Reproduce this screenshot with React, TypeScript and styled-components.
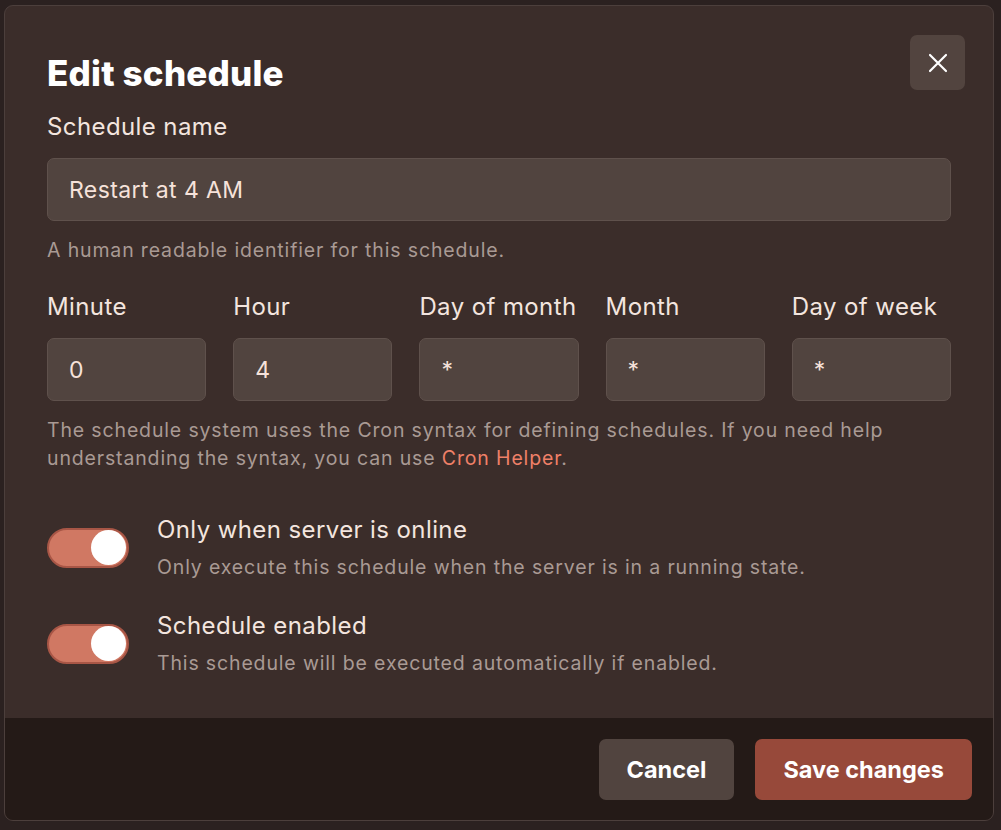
import { useState } from 'react'
import styled, { createGlobalStyle } from 'styled-components'

const GlobalStyle = createGlobalStyle`
  html, body {
    margin: 0;
    padding: 0;
    background: #2b2120;
  }
  body {
    font-family: Inter, "Noto Sans", sans-serif;
    color: #f3e5df;
  }
  * {
    box-sizing: border-box;
  }
`

const Page = styled.div`
  padding: 5px 7px 9px 4px;
  width: 1001px;
  height: 830px;
`

const DialogWindow = styled.div`
  position: relative;
  height: 816px;
  display: flex;
  flex-direction: column;
  background: #3b2d2a;
  border: 1px solid #4c3f3c;
  border-radius: 9px;
  overflow: hidden;
`

const DialogBody = styled.div`
  flex-grow: 1;
  display: flex;
  flex-direction: column;
  padding: 46px 42px 0 42px;
`

const Title = styled.h1`
  margin: 0;
  font-family: Inter, sans-serif;
  font-weight: 800;
  font-size: 35px;
  line-height: 42px;
  color: #ffffff;
  letter-spacing: 0.2px;
`

const CloseButton = styled.button`
  position: absolute;
  top: 29px;
  right: 28px;
  width: 55px;
  height: 55px;
  border: none;
  border-radius: 7px;
  background: #52443f;
  color: #ffffff;
  display: flex;
  align-items: center;
  justify-content: center;
  padding: 0;
  cursor: pointer;
`

const Field = styled.div<{ $top?: number }>`
  display: flex;
  flex-direction: column;
  margin-top: ${(p) => p.$top ?? 0}px;
  min-width: 0;
`

const Label = styled.label`
  font-size: 24px;
  line-height: 32px;
  letter-spacing: 0.4px;
  color: #f3e5df;
  margin-bottom: 15px;
  white-space: nowrap;
`

const Input = styled.input`
  height: 63px;
  width: 100%;
  background: #51443f;
  border: 1px solid #5f514c;
  border-radius: 7px;
  padding: 0 21px;
  font-family: Inter, sans-serif;
  font-size: 23px;
  letter-spacing: 0.4px;
  color: #f6e2da;
  outline: none;
`

const Helper = styled.p`
  margin: 15px 0 0 0;
  font-size: 19.5px;
  line-height: 28px;
  letter-spacing: 0.85px;
  color: #a99a94;
`

const HelperLink = styled.a`
  color: #ef8068;
  text-decoration: none;
`

const CronGrid = styled.div`
  display: grid;
  grid-template-columns: repeat(5, 1fr);
  column-gap: 27px;
  margin-top: 27px;
`

const ToggleRow = styled.div<{ $top: number }>`
  display: flex;
  align-items: center;
  gap: 28px;
  margin-top: ${(p) => p.$top}px;
`

const SwitchTrack = styled.button<{ $on: boolean }>`
  flex-shrink: 0;
  width: 82px;
  height: 40px;
  border-radius: 20px;
  border: 2px solid ${(p) => (p.$on ? '#a85646' : '#5f514c')};
  background: ${(p) => (p.$on ? '#d07863' : '#51443f')};
  padding: 0 1px;
  display: flex;
  align-items: center;
  justify-content: ${(p) => (p.$on ? 'flex-end' : 'flex-start')};
  cursor: pointer;
`

const SwitchKnob = styled.span`
  width: 35px;
  height: 35px;
  border-radius: 50%;
  background: #ffffff;
`

const ToggleText = styled.div`
  display: flex;
  flex-direction: column;
  gap: 7px;
`

const ToggleLabel = styled.div`
  font-size: 24px;
  line-height: 32px;
  letter-spacing: 0.4px;
  color: #f3e5df;
`

const ToggleDesc = styled.div`
  font-size: 19.5px;
  line-height: 28px;
  letter-spacing: 0.85px;
  color: #a99a94;
`

const DialogFooter = styled.div`
  height: 102px;
  background: #241a17;
  display: flex;
  justify-content: flex-end;
  align-items: center;
  gap: 21px;
  padding: 0 21px;
`

const Button = styled.button<{ $primary?: boolean }>`
  height: 61px;
  padding: 0 28px;
  border: none;
  border-radius: 7px;
  background: ${(p) => (p.$primary ? '#97493a' : '#51443f')};
  color: #ffffff;
  font-family: Inter, sans-serif;
  font-weight: 700;
  font-size: 23.5px;
  cursor: pointer;
`

const cronFields = [
  { label: 'Minute', value: '0' },
  { label: 'Hour', value: '4' },
  { label: 'Day of month', value: '*' },
  { label: 'Month', value: '*' },
  { label: 'Day of week', value: '*' },
]

function Toggle({ on, onChange }: { on: boolean; onChange: (v: boolean) => void }) {
  return (
    <SwitchTrack $on={on} onClick={() => onChange(!on)} aria-pressed={on}>
      <SwitchKnob />
    </SwitchTrack>
  )
}

export default function App() {
  const [online, setOnline] = useState(true)
  const [enabled, setEnabled] = useState(true)

  return (
    <Page>
      <GlobalStyle />
      <DialogWindow>
        <CloseButton aria-label="Close">
          <svg width="24" height="24" viewBox="0 0 24 24" fill="none" stroke="currentColor" strokeWidth="2.2" strokeLinecap="round">
            <path d="M4 4l16 16M20 4L4 20" />
          </svg>
        </CloseButton>
        <DialogBody>
          <Title>Edit schedule</Title>
          <Field $top={17}>
            <Label>Schedule name</Label>
            <Input defaultValue="Restart at 4 AM" />
          </Field>
          <Helper>A human readable identifier for this schedule.</Helper>
          <CronGrid>
            {cronFields.map((f) => (
              <Field key={f.label}>
                <Label>{f.label}</Label>
                <Input defaultValue={f.value} />
              </Field>
            ))}
          </CronGrid>
          <Helper>
            The schedule system uses the Cron syntax for defining schedules. If you need help
            understanding the syntax, you can use <HelperLink href="#">Cron Helper</HelperLink>.
          </Helper>
          <ToggleRow $top={42}>
            <Toggle on={online} onChange={setOnline} />
            <ToggleText>
              <ToggleLabel>Only when server is online</ToggleLabel>
              <ToggleDesc>Only execute this schedule when the server is in a running state.</ToggleDesc>
            </ToggleText>
          </ToggleRow>
          <ToggleRow $top={29}>
            <Toggle on={enabled} onChange={setEnabled} />
            <ToggleText>
              <ToggleLabel>Schedule enabled</ToggleLabel>
              <ToggleDesc>This schedule will be executed automatically if enabled.</ToggleDesc>
            </ToggleText>
          </ToggleRow>
        </DialogBody>
        <DialogFooter>
          <Button>Cancel</Button>
          <Button $primary>Save changes</Button>
        </DialogFooter>
      </DialogWindow>
    </Page>
  )
}
